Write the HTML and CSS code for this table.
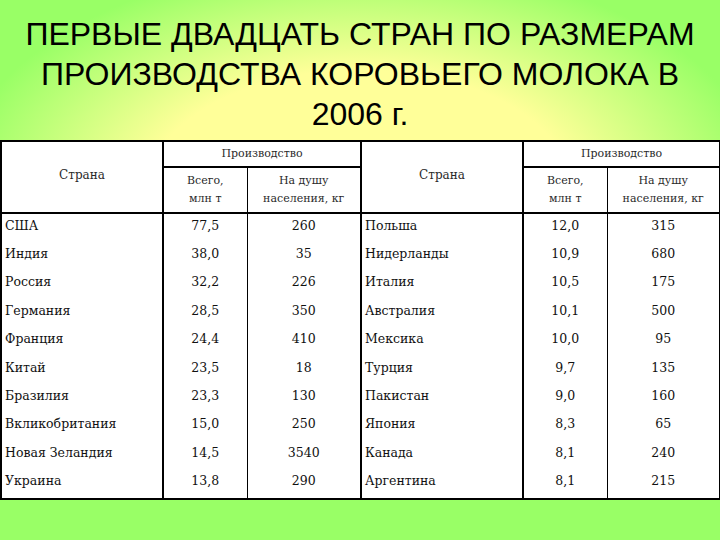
FILE: index.html
```html
<!DOCTYPE html>
<html lang="ru">
<head>
<meta charset="utf-8">
<title>Производство коровьего молока</title>
<link rel="stylesheet" href="styles.css">
</head>
<body>
<div class="slide">
  <h1 class="title">ПЕРВЫЕ ДВАДЦАТЬ СТРАН ПО РАЗМЕРАМ<br>ПРОИЗВОДСТВА КОРОВЬЕГО МОЛОКА В<br>2006 г.</h1>
  <table class="data">
    <colgroup>
      <col class="c-country"><col class="c-total"><col class="c-per">
      <col class="c-country2"><col class="c-total"><col class="c-per2">
    </colgroup>
    <thead>
      <tr>
        <th rowspan="2" class="h-country">Страна</th>
        <th colspan="2" class="h-prod">Производство</th>
        <th rowspan="2" class="h-country">Страна</th>
        <th colspan="2" class="h-prod">Производство</th>
      </tr>
      <tr>
        <th class="h-sub thin-r">Всего,<br>млн т</th>
        <th class="h-sub">На душу<br>населения, кг</th>
        <th class="h-sub thin-r">Всего,<br>млн т</th>
        <th class="h-sub">На душу<br>населения, кг</th>
      </tr>
    </thead>
    <tbody>
      <tr><td class="name">США</td><td class="num thin-r">77,5</td><td class="num">260</td><td class="name">Польша</td><td class="num thin-r">12,0</td><td class="num">315</td></tr>
      <tr><td class="name">Индия</td><td class="num thin-r">38,0</td><td class="num">35</td><td class="name">Нидерланды</td><td class="num thin-r">10,9</td><td class="num">680</td></tr>
      <tr><td class="name">Россия</td><td class="num thin-r">32,2</td><td class="num">226</td><td class="name">Италия</td><td class="num thin-r">10,5</td><td class="num">175</td></tr>
      <tr><td class="name">Германия</td><td class="num thin-r">28,5</td><td class="num">350</td><td class="name">Австралия</td><td class="num thin-r">10,1</td><td class="num">500</td></tr>
      <tr><td class="name">Франция</td><td class="num thin-r">24,4</td><td class="num">410</td><td class="name">Мексика</td><td class="num thin-r">10,0</td><td class="num">95</td></tr>
      <tr><td class="name">Китай</td><td class="num thin-r">23,5</td><td class="num">18</td><td class="name">Турция</td><td class="num thin-r">9,7</td><td class="num">135</td></tr>
      <tr><td class="name">Бразилия</td><td class="num thin-r">23,3</td><td class="num">130</td><td class="name">Пакистан</td><td class="num thin-r">9,0</td><td class="num">160</td></tr>
      <tr><td class="name">Вкликобритания</td><td class="num thin-r">15,0</td><td class="num">250</td><td class="name">Япония</td><td class="num thin-r">8,3</td><td class="num">65</td></tr>
      <tr><td class="name">Новая Зеландия</td><td class="num thin-r">14,5</td><td class="num">3540</td><td class="name">Канада</td><td class="num thin-r">8,1</td><td class="num">240</td></tr>
      <tr><td class="name">Украина</td><td class="num thin-r">13,8</td><td class="num">290</td><td class="name">Аргентина</td><td class="num thin-r">8,1</td><td class="num">215</td></tr>
    </tbody>
  </table>
</div>
</body>
</html>
```

FILE: styles.css
```css
html, body {
  margin: 0;
  padding: 0;
}
body {
  width: 720px;
  height: 540px;
  overflow: hidden;
  background-color: #99ff66;
  background-image: radial-gradient(ellipse 440px 250px at 360px 190px, #ffff99 0%, #ffff99 48%, #99ff66 92%);
}
.slide {
  width: 720px;
  height: 540px;
  display: flex;
  flex-direction: column;
}
.title {
  margin: 0;
  padding: 14px 0 0;
  height: 126px;
  font-family: "Liberation Sans", Arial, sans-serif;
  font-weight: normal;
  font-size: 32px;
  line-height: 40px;
  text-align: center;
  color: #000;
  white-space: nowrap;
}
.data {
  width: 719px;
  border-collapse: collapse;
  background: #fff;
  border: 2px solid #000;
  font-family: "DejaVu Serif", "Liberation Serif", serif;
  color: #111;
  table-layout: fixed;
}
.c-country { width: 162px; }
.c-total { width: 84px; }
.c-per { width: 114px; }
.c-country2 { width: 162px; }
.c-per2 { width: 113px; }
.data th, .data td {
  padding: 0;
  border-right: 2px solid #000;
}
.data th {
  font-weight: normal;
  font-size: 11px;
  color: #2a2a2a;
  line-height: 18px;
  text-align: center;
  vertical-align: middle;
}
.data .h-country {
  font-size: 12px;
  border-bottom: 2px solid #000;
  padding-bottom: 4px;
}
.h-prod {
  height: 24px;
  border-bottom: 2px solid #000;
}
.h-sub {
  height: 44px;
  border-bottom: 2px solid #000;
}
.data .thin-r {
  border-right: 1px solid #000;
}
.data td {
  height: 23.4px;
  padding-bottom: 5px;
  font-size: 12.5px;
  line-height: 16px;
  vertical-align: middle;
}
.data .name {
  text-align: left;
  padding-left: 3px;
}
.num {
  text-align: center;
}
```
